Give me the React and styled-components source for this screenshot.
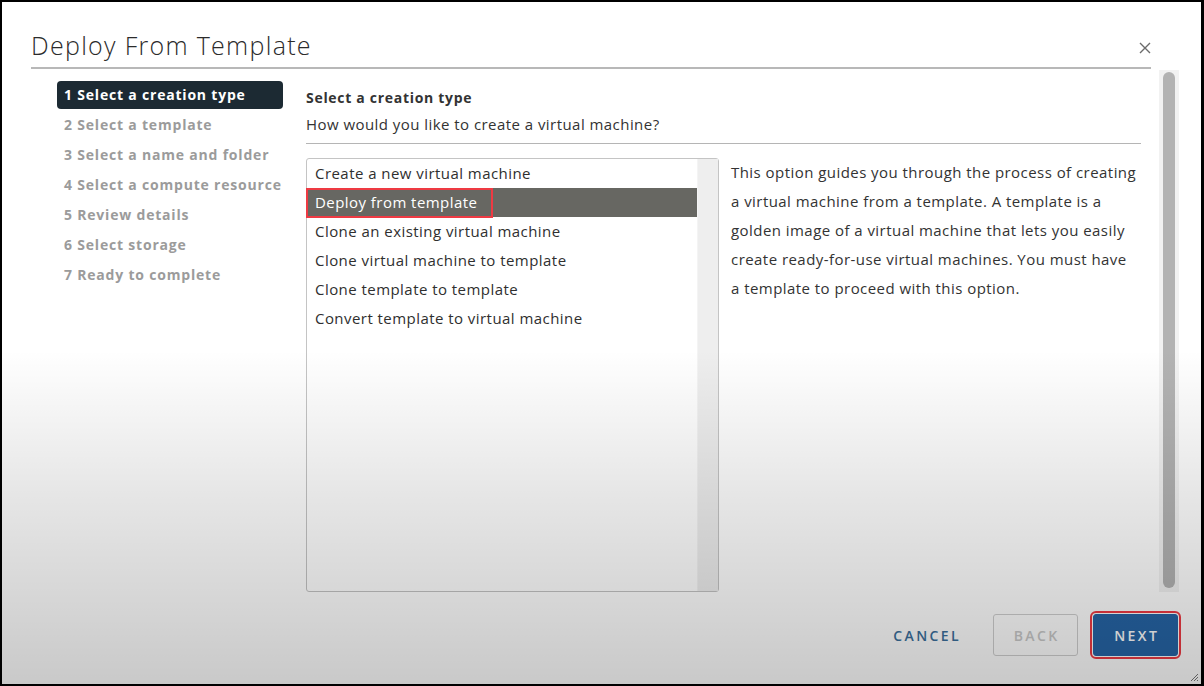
import React from 'react'
import styled, { createGlobalStyle } from 'styled-components'

const GlobalStyle = createGlobalStyle`
  html, body {
    margin: 0;
    padding: 0;
    background: #000;
  }
  body {
    font-family: "Open Sans", "Liberation Sans", sans-serif;
  }
`

const Frame = styled.div`
  position: relative;
  box-sizing: border-box;
  width: 1204px;
  height: 686px;
  padding: 2px 3px 2px 2px;
  background: #000;

  &::after {
    content: '';
    position: absolute;
    left: 2px;
    right: 3px;
    top: 2px;
    bottom: 2px;
    pointer-events: none;
    background: linear-gradient(
      to bottom,
      rgba(0, 0, 0, 0) 51%,
      rgba(0, 0, 0, 0.1) 73%,
      rgba(0, 0, 0, 0.21) 100%
    );
  }
`

const Dialog = styled.div`
  position: relative;
  display: flex;
  flex-direction: column;
  height: 100%;
  background: #fff;
  box-sizing: border-box;
`

const Header = styled.div`
  display: flex;
  align-items: center;
  justify-content: space-between;
  margin: 0 50px 0 29px;
  padding-top: 27px;
  border-bottom: 2px solid #b8b8b8;
`

const Title = styled.h1`
  margin: 0;
  padding-bottom: 5px;
  font-size: 25px;
  line-height: 33px;
  font-weight: 300;
  color: #2b2b2b;
  letter-spacing: 1.3px;
`

const Close = styled.button`
  display: flex;
  align-items: center;
  justify-content: center;
  width: 20px;
  height: 20px;
  margin: 0 -4px 0 0;
  padding: 0;
  border: none;
  background: none;
`

const Body = styled.div`
  display: flex;
  height: 523px;
  padding-left: 55px;
`

const Nav = styled.ul`
  display: flex;
  flex-direction: column;
  gap: 2px;
  width: 226px;
  margin: 12px 23px 0 0;
  padding: 0;
  list-style: none;
`

const Step = styled.li`
  height: 28px;
  line-height: 28px;
  padding-left: 7px;
  border-radius: 4px;
  font-size: 14px;
  font-weight: 700;
  letter-spacing: 0.8px;
  white-space: nowrap;
  color: ${(p) => (p.active ? '#fff' : '#9b9b9b')};
  background: ${(p) => (p.active ? '#1c2a33' : 'transparent')};
`

const Main = styled.div`
  display: flex;
  flex-direction: column;
  width: 835px;
`

const Heading = styled.div`
  margin-top: 18px;
  font-size: 14px;
  line-height: 22px;
  font-weight: 700;
  letter-spacing: 0.7px;
  color: #333;
`

const Subtitle = styled.div`
  margin-top: 4px;
  font-size: 15px;
  line-height: 22px;
  letter-spacing: 0.45px;
  color: #333;
  padding-bottom: 8px;
  border-bottom: 1px solid #b5b5b5;
`

const Content = styled.div`
  display: flex;
  gap: 12px;
  margin-top: 14px;
  height: 435px;
`

const ListBox = styled.div`
  display: flex;
  flex-shrink: 0;
  width: 413px;
  box-sizing: border-box;
  border: 1px solid #c4c4c4;
  border-radius: 3px;
  background: #fff;
`

const Options = styled.ul`
  flex: 1;
  margin: 0;
  padding: 0;
  list-style: none;
`

const Option = styled.li`
  position: relative;
  height: 29px;
  line-height: 29px;
  padding-left: 8px;
  font-size: 15px;
  letter-spacing: 0.45px;
  color: ${(p) => (p.selected ? '#fff' : '#2f2f2f')};
  background: ${(p) => (p.selected ? '#676762' : 'transparent')};
`

const Highlight = styled.span`
  position: absolute;
  left: -1px;
  top: 0;
  width: 187px;
  height: 30px;
  box-sizing: border-box;
  border: 2px solid #ee3a43;
`

const ListTrack = styled.div`
  width: 20px;
  background: #eeeeee;
  border-left: 1px solid #f4f4f4;
`

const Description = styled.p`
  margin: 0;
  flex: 1;
  font-size: 15px;
  line-height: 29px;
  color: #333;
  white-space: nowrap;
  letter-spacing: 0.45px;
`

const ScrollTrack = styled.div`
  display: flex;
  justify-content: center;
  width: 20px;
  margin: 1px 0 0 18px;
  padding: 2px 0 4px;
  box-sizing: border-box;
  height: 522px;
  background: #f2f2f2;
`

const ScrollThumb = styled.div`
  width: 12px;
  border-radius: 6px;
  background: #b3b3b3;
`

const Footer = styled.div`
  display: flex;
  justify-content: flex-end;
  align-items: center;
  gap: 15px;
  padding: 22px 23px 0 0;
`

const Button = styled.button`
  width: 85px;
  height: 42px;
  box-sizing: border-box;
  border-radius: 3px;
  font-family: "Open Sans", "Liberation Sans", sans-serif;
  font-size: 14px;
  font-weight: 600;
  letter-spacing: 2.4px;
  text-indent: 2.4px;
  border: 1px solid ${(p) => (p.variant === 'primary' ? '#2665a6' : p.variant === 'outline' ? '#cfcfcf' : 'transparent')};
  background: ${(p) => (p.variant === 'primary' ? '#2665a6' : 'transparent')};
  color: ${(p) => (p.variant === 'primary' ? '#fff' : p.variant === 'outline' ? '#c9c9c9' : '#3b6f9c')};
  ${(p) => p.marked && 'outline: 2px solid #ee3a43; outline-offset: 1px;'}
`

const CancelButton = styled(Button)`
  width: 100px;
  margin-right: 2px;
`

const Grip = styled.svg`
  position: absolute;
  right: 2px;
  bottom: 2px;
`

const steps = [
  '1 Select a creation type',
  '2 Select a template',
  '3 Select a name and folder',
  '4 Select a compute resource',
  '5 Review details',
  '6 Select storage',
  '7 Ready to complete',
]

const options = [
  'Create a new virtual machine',
  'Deploy from template',
  'Clone an existing virtual machine',
  'Clone virtual machine to template',
  'Clone template to template',
  'Convert template to virtual machine',
]

const descLines = [
  'This option guides you through the process of creating',
  'a virtual machine from a template. A template is a',
  'golden image of a virtual machine that lets you easily',
  'create ready-for-use virtual machines. You must have',
  'a template to proceed with this option.',
]

export default function App() {
  const selected = 1

  return (
    <>
      <GlobalStyle />
      <Frame>
        <Dialog>
          <Header>
            <Title>Deploy From Template</Title>
            <Close aria-label="Close">
              <svg width="12" height="12" viewBox="0 0 12 12">
                <path d="M1 1 L11 11 M11 1 L1 11" stroke="#6b6b6b" strokeWidth="1.4" />
              </svg>
            </Close>
          </Header>

          <Body>
            <Nav>
              {steps.map((s, i) => (
                <Step key={s} active={i === 0}>
                  {s}
                </Step>
              ))}
            </Nav>

            <Main>
              <Heading>Select a creation type</Heading>
              <Subtitle>How would you like to create a virtual machine?</Subtitle>
              <Content>
                <ListBox>
                  <Options>
                    {options.map((o, i) => (
                      <Option key={o} selected={i === selected}>
                        {o}
                        {i === selected && <Highlight />}
                      </Option>
                    ))}
                  </Options>
                  <ListTrack />
                </ListBox>
                <Description>
                  {descLines.map((l) => (
                    <React.Fragment key={l}>
                      {l}
                      <br />
                    </React.Fragment>
                  ))}
                </Description>
              </Content>
            </Main>

            <ScrollTrack>
              <ScrollThumb />
            </ScrollTrack>
          </Body>

          <Footer>
            <CancelButton>CANCEL</CancelButton>
            <Button variant="outline">BACK</Button>
            <Button variant="primary" marked>
              NEXT
            </Button>
          </Footer>

          <Grip width="9" height="9" viewBox="0 0 9 9">
            <path d="M8 1 L1 8 M8 4 L4 8 M8 7 L7 8" stroke="#777" strokeWidth="1" />
          </Grip>
        </Dialog>
      </Frame>
    </>
  )
}
